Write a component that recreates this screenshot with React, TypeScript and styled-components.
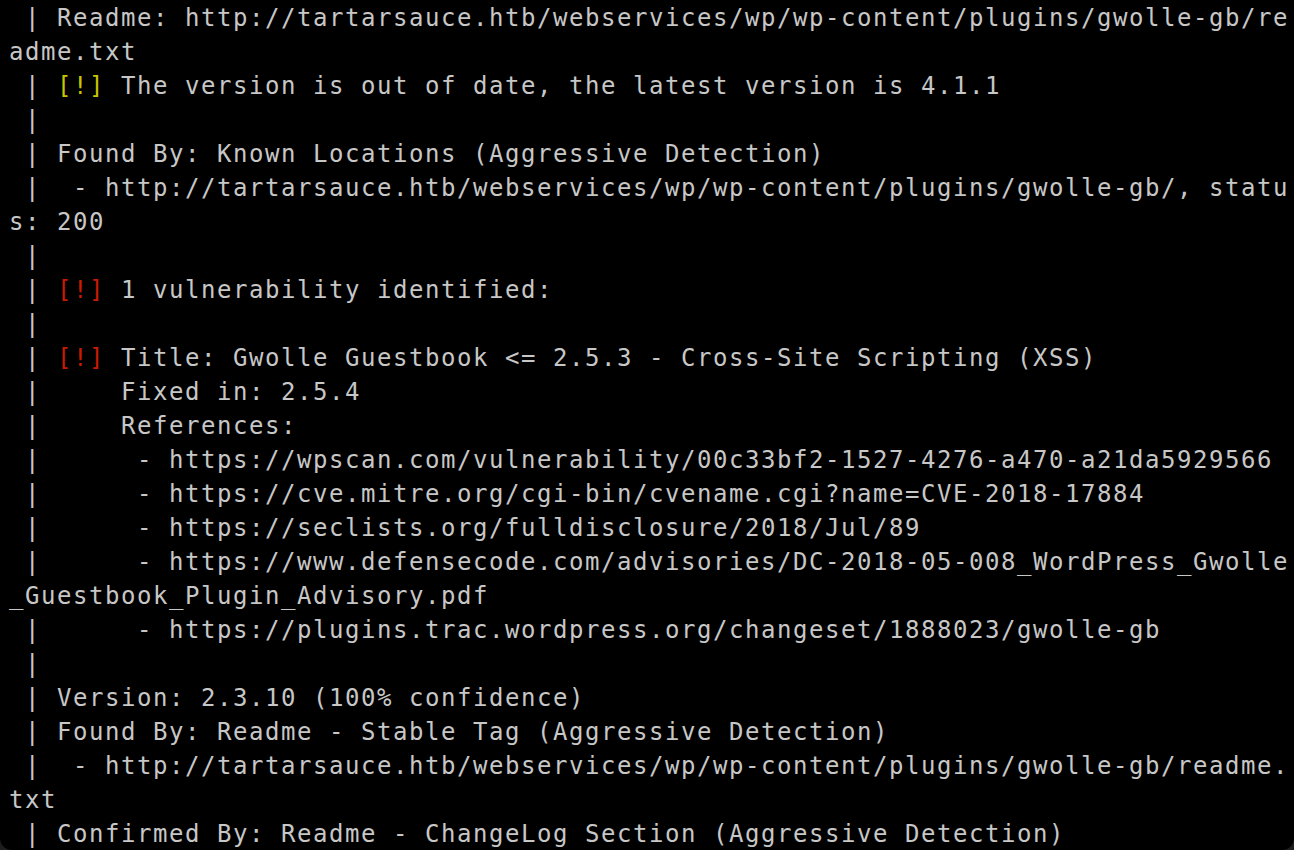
import React from "react";
import styled, { createGlobalStyle } from "styled-components";

const Global = createGlobalStyle`
  html, body {
    margin: 0;
    padding: 0;
    background: #1e1e1e;
  }
  #root {
    width: 1294px;
    height: 850px;
  }
`;

const Window = styled.div`
  width: 1294px;
  height: 850px;
  box-sizing: border-box;
  background: #000000;
  border-bottom-left-radius: 12px;
  border-bottom-right-radius: 12px;
  overflow: hidden;
  padding: 1px 0 0 9px;
`;

const Line = styled.div`
  font-family: "DejaVu Sans Mono", "Liberation Mono", monospace;
  font-size: 24px;
  letter-spacing: 1.55px;
  line-height: 34px;
  height: 34px;
  color: #c7c7c7;
  white-space: pre;
`;

const Tag = styled.span<{ $tone: "warn" | "alert" }>`
  color: ${(p) => (p.$tone === "warn" ? "#c7c400" : "#c91b00")};
`;

type Seg = string | { tag: "warn" | "alert" };
const lines: Seg[][] = [
  [" | Readme: http://tartarsauce.htb/webservices/wp/wp-content/plugins/gwolle-gb/re"],
  ["adme.txt"],
  [" | ", { tag: "warn" }, " The version is out of date, the latest version is 4.1.1"],
  [" |"],
  [" | Found By: Known Locations (Aggressive Detection)"],
  [" |  - http://tartarsauce.htb/webservices/wp/wp-content/plugins/gwolle-gb/, statu"],
  ["s: 200"],
  [" |"],
  [" | ", { tag: "alert" }, " 1 vulnerability identified:"],
  [" |"],
  [" | ", { tag: "alert" }, " Title: Gwolle Guestbook <= 2.5.3 - Cross-Site Scripting (XSS)"],
  [" |     Fixed in: 2.5.4"],
  [" |     References:"],
  [" |      - https://wpscan.com/vulnerability/00c33bf2-1527-4276-a470-a21da5929566"],
  [" |      - https://cve.mitre.org/cgi-bin/cvename.cgi?name=CVE-2018-17884"],
  [" |      - https://seclists.org/fulldisclosure/2018/Jul/89"],
  [" |      - https://www.defensecode.com/advisories/DC-2018-05-008_WordPress_Gwolle"],
  ["_Guestbook_Plugin_Advisory.pdf"],
  [" |      - https://plugins.trac.wordpress.org/changeset/1888023/gwolle-gb"],
  [" |"],
  [" | Version: 2.3.10 (100% confidence)"],
  [" | Found By: Readme - Stable Tag (Aggressive Detection)"],
  [" |  - http://tartarsauce.htb/webservices/wp/wp-content/plugins/gwolle-gb/readme."],
  ["txt"],
  [" | Confirmed By: Readme - ChangeLog Section (Aggressive Detection)"],
];

export default function App() {
  return (
    <>
      <Global />
      <Window>
        {lines.map((segs, i) => (
          <Line key={i}>
            {segs.map((s, j) =>
              typeof s === "string" ? (
                <React.Fragment key={j}>{s}</React.Fragment>
              ) : (
                <Tag key={j} $tone={s.tag}>
                  [!]
                </Tag>
              )
            )}
          </Line>
        ))}
      </Window>
    </>
  );
}
